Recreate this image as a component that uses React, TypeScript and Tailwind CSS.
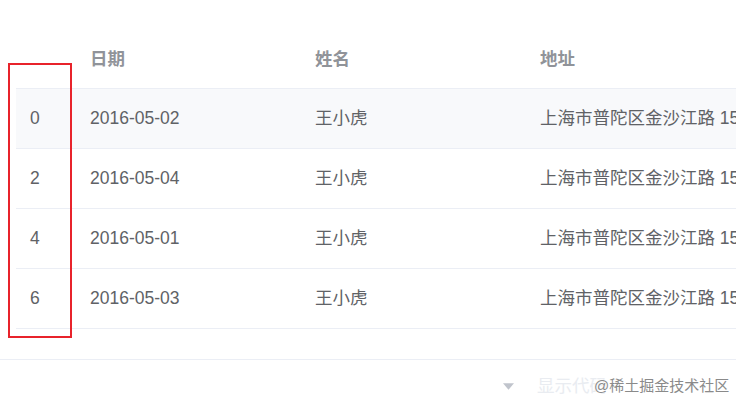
const rows = [
  { idx: 0, date: "2016-05-02" },
  { idx: 2, date: "2016-05-04" },
  { idx: 4, date: "2016-05-01" },
  { idx: 6, date: "2016-05-03" },
];

const font = "font-['Liberation_Sans','Noto_Sans_CJK_SC',sans-serif]";

export default function App() {
  return (
    <div className={`relative h-[399px] w-[736px] overflow-hidden bg-white ${font}`}>
      <div className="pt-[31px] pl-[16px]">
        <div className="flex h-[58px] items-center border-b border-[#ebeef5] text-[17.5px] font-bold text-[#909399] whitespace-nowrap">
          <div className="w-[74px] shrink-0" />
          <div className="w-[225px] shrink-0">日期</div>
          <div className="w-[225px] shrink-0">姓名</div>
          <div className="flex-1">地址</div>
        </div>
        {rows.map((r, i) => (
          <div
            key={r.idx}
            className={`flex h-[60px] items-center border-b border-[#ebeef5] text-[17.5px] text-[#606266] whitespace-nowrap ${
              i === 0 ? "bg-[#f8f9fb]" : "bg-white"
            }`}
          >
            <div className="w-[74px] shrink-0 pl-[14px]">{r.idx}</div>
            <div className="w-[225px] shrink-0">{r.date}</div>
            <div className="w-[225px] shrink-0">王小虎</div>
            <div className="min-w-0 flex-1 overflow-hidden">上海市普陀区金沙江路 1518 弄</div>
          </div>
        ))}
      </div>

      <div className="mt-[30px] border-t border-[#ebeef5]">
        <div className="flex h-[52px] items-center pl-[503px] whitespace-nowrap">
          <svg width="11" height="7" viewBox="0 0 10 6" className="mr-[23px]">
            <path d="M0 0h10L5 6z" fill="#c0c4cc" />
          </svg>
          <span className="text-[17.5px] text-[#e9ecf1]">显示代码</span>
        </div>
      </div>

      {/* red highlight box */}
      <div className="absolute left-[8px] top-[63px] h-[275px] w-[64px] border-2 border-[#e8232b]" />

      {/* watermark */}
      <div className="absolute left-[594px] top-[375px] text-[15px] text-[#8a8a8a] whitespace-nowrap [text-shadow:0_0_2px_#fff,0_0_2px_#fff]">
        @稀土掘金技术社区
      </div>
    </div>
  );
}
